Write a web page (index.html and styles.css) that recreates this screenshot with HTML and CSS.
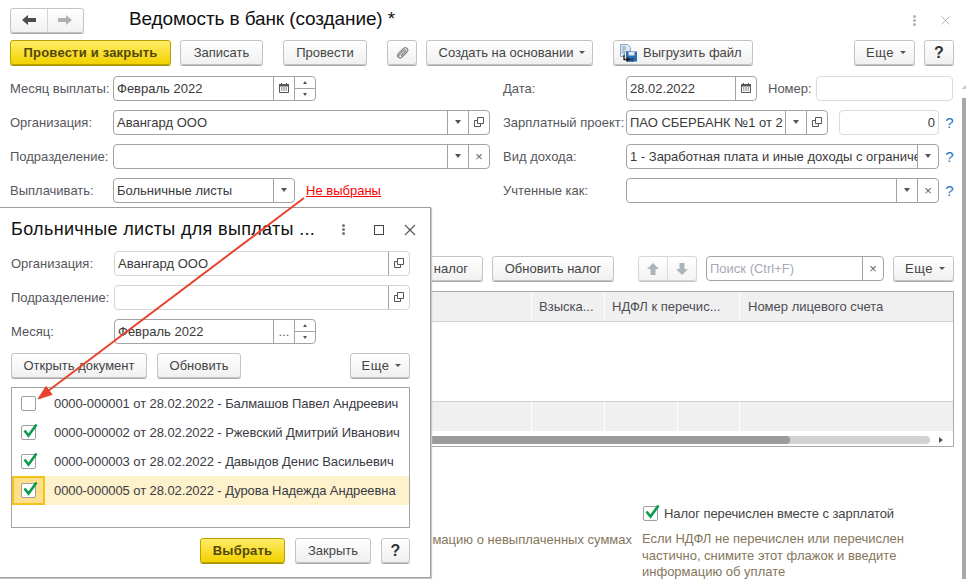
FILE: index.html
```html
<!DOCTYPE html>
<html lang="ru">
<head>
<meta charset="utf-8">
<title>Ведомость в банк</title>
<link rel="stylesheet" href="styles.css">
</head>
<body>
<svg class="defs" width="0" height="0">
  <symbol id="cal" viewBox="0 0 12 12"><path d="M1.5 2.5h9v8h-9z" fill="#fff" stroke="#555"/><path d="M1.5 2h9v2.5h-9z" fill="#555"/><path d="M3.5 1v2M8.500 1v2" stroke="#555"/><path d="M3 6h1.500M5.300 6h1.500M7.600 6h1.400M3 8h1.500M5.300 8h1.500M7.600 8h1.400" stroke="#555"/></symbol>
  <symbol id="open" viewBox="0 0 12 12"><path d="M4.500 1.500h6v6h-6z" fill="none" stroke="#555"/><path d="M1.500 4.500h3v3h3v3h-6z" fill="#fff" stroke="#555"/></symbol>
  <symbol id="check" viewBox="0 0 18 18"><path d="M3.500 8.500l4 5 8-11" fill="none" stroke="#0a9b4f" stroke-width="2.600"/></symbol>
</svg>

<div class="page">
  <header class="head">
    <div class="nav">
      <span class="nav-btn"><svg width="16" height="12" viewBox="0 0 16 12"><path d="M1 6l6-5v3h8v4H7v3z" fill="#4d4d4d"/></svg></span>
      <span class="nav-btn"><svg width="16" height="12" viewBox="0 0 16 12"><path d="M15 6L9 1v3H1v4h8v3z" fill="#b0b0b0"/></svg></span>
    </div>
    <h1 class="title">Ведомость в банк (создание) *</h1>
    <span class="dots"><i></i><i></i><i></i></span>
    <svg class="close" width="9" height="9" viewBox="0 0 9 9"><path d="M.5.500l8 8M8.500.500l-8 8" stroke="#b5b5b5"/></svg>
  </header>

  <div class="toolbar">
    <button class="btn primary w-161">Провести и закрыть</button>
    <button class="btn w-83 ml-9">Записать</button>
    <button class="btn w-84 ml-20">Провести</button>
    <button class="btn w-30 ml-20"><svg width="16" height="16" viewBox="0 0 16 16"><path d="M4.500 12.500c-1.500-1.500-1-3 0-4l5-5c1-1 2.500-1 3.500 0s1 2.500 0 3.500L7.500 12.500c-.7.700-1.700.700-2.400 0s-.7-1.700 0-2.400l5-5c.4-.4 1-.4 1.300 0s.4.900 0 1.300L7 11" fill="none" stroke="#8a8a8a" stroke-width="1.200"/></svg></button>
    <button class="btn w-167 ml-9 pad-l">Создать на основании<span class="caret"></span></button>
    <button class="btn w-140 ml-20 icon-btn"><svg width="20" height="20" viewBox="0 0 20 20"><path d="M1.500 1.500h7l3 3v4h-6v5h-4z" fill="#dfe8f3" stroke="#8ba3c2"/><path d="M3 4h4M3 6h4M3 8h2M3 10h2" stroke="#7f99bb"/><path d="M7 8.500h11v10H7z" fill="#2a6fb0"/><path d="M9.500 9h6v3.500h-6z" fill="#dfe8f3"/><path d="M10 15h5v3.500h-5z" fill="#1d4f80"/><path d="M5 12v4.500h5M8 14.500l2.300 2-2.300 2" fill="none" stroke="#222" stroke-width="1.300"/></svg>Выгрузить файл</button>
    <button class="btn w-61 ml-auto more">Еще<span class="caret"></span></button>
    <button class="btn w-30 ml-9 help">?</button>
  </div>

  <section class="fields">
    <div class="col col-left">
      <div class="row">
        <label class="lbl">Месяц выплаты:</label>
        <div class="input w-203"><span class="val">Февраль 2022</span><span class="seg"><svg width="12" height="12"><use href="#cal"/></svg></span><span class="spin"><span class="tri-up"></span><span class="tri-down"></span></span></div>
      </div>
      <div class="row">
        <label class="lbl">Организация:</label>
        <div class="input w-377"><span class="val">Авангард ООО</span><span class="seg"><span class="tri"></span></span><span class="seg"><svg width="12" height="12"><use href="#open"/></svg></span></div>
      </div>
      <div class="row">
        <label class="lbl">Подразделение:</label>
        <div class="input w-377"><span class="val"></span><span class="seg"><span class="tri"></span></span><span class="seg x">×</span></div>
      </div>
      <div class="row">
        <label class="lbl">Выплачивать:</label>
        <div class="input w-182"><span class="val">Больничные листы</span><span class="seg"><span class="tri"></span></span></div>
        <a class="red-link">Не выбраны</a>
      </div>
    </div>
    <div class="col col-right">
      <div class="row">
        <label class="lbl lbl-r">Дата:</label>
        <div class="input w-131"><span class="val">28.02.2022</span><span class="seg"><svg width="12" height="12"><use href="#cal"/></svg></span></div>
        <label class="lbl lbl-n">Номер:</label>
        <div class="input w-137 light"></div>
      </div>
      <div class="row">
        <label class="lbl lbl-r">Зарплатный проект:</label>
        <div class="input w-202"><span class="val">ПАО СБЕРБАНК №1 от 2</span><span class="seg"><span class="tri"></span></span><span class="seg"><svg width="12" height="12"><use href="#open"/></svg></span></div>
        <div class="input w-100 light ml-11"><span class="val right">0</span></div>
        <span class="q">?</span>
      </div>
      <div class="row">
        <label class="lbl lbl-r">Вид дохода:</label>
        <div class="input w-313"><span class="val">1 - Заработная плата и иные доходы с ограниче</span><span class="seg"><span class="tri"></span></span></div>
        <span class="q">?</span>
      </div>
      <div class="row">
        <label class="lbl lbl-r">Учтенные как:</label>
        <div class="input w-313"><span class="val"></span><span class="seg"><span class="tri"></span></span><span class="seg x">×</span></div>
        <span class="q">?</span>
      </div>
    </div>
  </section>

  <div class="toolbar2">
    <button class="btn w-121 tax">Пересчитать налог</button>
    <button class="btn w-122 ml-9">Обновить налог</button>
    <div class="updown ml-24">
      <span><svg width="14" height="12" viewBox="0 0 14 12"><path d="M7 0l6 6H9.500v6h-5V6H1z" fill="#a9b4bb"/></svg></span>
      <span><svg width="14" height="12" viewBox="0 0 14 12"><path d="M7 12l6-6H9.500V0h-5v6H1z" fill="#a9b4bb"/></svg></span>
    </div>
    <div class="input w-178 ml-9 search"><span class="val ph">Поиск (Ctrl+F)</span><span class="seg x">×</span></div>
    <button class="btn w-61 ml-9 more">Еще<span class="caret"></span></button>
  </div>

  <div class="table">
    <div class="t-head">
      <span class="c c1"></span><span class="c c2">Взыска...</span><span class="c c3">НДФЛ к перечис...</span><span class="c c4">Номер лицевого счета</span>
    </div>
    <div class="t-body"></div>
    <div class="t-foot">
      <span class="c c1"></span><span class="c c2"></span><span class="c c3a"></span><span class="c c3b"></span><span class="c c4"></span>
    </div>
    <div class="t-scroll"><div class="track"><div class="thumb"></div></div><span class="tri-right"></span></div>
  </div>

  <section class="bottom">
    <p class="note-left">Информацию о невыплаченных суммах</p>
    <div class="note-right">
      <div class="tick-line"><span class="box"><svg class="mark" width="18" height="18"><use href="#check"/></svg></span><span class="tick-text">Налог перечислен вместе с зарплатой</span></div>
      <p class="note">Если НДФЛ не перечислен или перечислен<br>частично, снимите этот флажок и введите<br>информацию об уплате</p>
    </div>
  </section>

  <div class="v-scroll"></div>

  <div class="under"><span class="under-a">Ш</span><span class="under-b">Т</span></div>

  <aside class="modal">
    <div class="m-head">
      <h2 class="m-title">Больничные листы для выплаты ...</h2>
      <span class="dots dark"><i></i><i></i><i></i></span>
      <span class="square"></span>
      <svg class="m-close" width="12" height="12" viewBox="0 0 12 12"><path d="M1 1l10 10M11 1L1 11" stroke="#555" stroke-width="1.100"/></svg>
    </div>
    <div class="m-row">
      <label class="lbl m-lbl">Организация:</label>
      <div class="input w-296 light-b"><span class="val">Авангард ООО</span><span class="seg"><svg width="12" height="12"><use href="#open"/></svg></span></div>
    </div>
    <div class="m-row">
      <label class="lbl m-lbl">Подразделение:</label>
      <div class="input w-296 light-b"><span class="val"></span><span class="seg"><svg width="12" height="12"><use href="#open"/></svg></span></div>
    </div>
    <div class="m-row">
      <label class="lbl m-lbl">Месяц:</label>
      <div class="input w-202"><span class="val">Февраль 2022</span><span class="seg dots-seg">...</span><span class="spin"><span class="tri-up"></span><span class="tri-down"></span></span></div>
    </div>
    <div class="m-tools">
      <button class="btn w-136">Открыть документ</button>
      <button class="btn w-84 ml-10">Обновить</button>
      <button class="btn w-60 ml-auto more">Еще<span class="caret"></span></button>
    </div>
    <ul class="m-list">
      <li class="m-item"><span class="cell"><span class="box"></span></span><span class="doc">0000-000001 от 28.02.2022 - Балмашов Павел Андреевич</span></li>
      <li class="m-item"><span class="cell"><span class="box"><svg class="mark" width="18" height="18"><use href="#check"/></svg></span></span><span class="doc">0000-000002 от 28.02.2022 - Ржевский Дмитрий Иванович</span></li>
      <li class="m-item"><span class="cell"><span class="box"><svg class="mark" width="18" height="18"><use href="#check"/></svg></span></span><span class="doc">0000-000003 от 28.02.2022 - Давыдов Денис Васильевич</span></li>
      <li class="m-item current"><span class="cell"><span class="box"><svg class="mark" width="18" height="18"><use href="#check"/></svg></span></span><span class="doc">0000-000005 от 28.02.2022 - Дурова Надежда Андреевна</span></li>
    </ul>
    <div class="m-foot">
      <button class="btn primary w-85">Выбрать</button>
      <button class="btn w-76 ml-10">Закрыть</button>
      <button class="btn w-29 ml-10 help">?</button>
    </div>
  </aside>

  <svg class="arrow" width="966" height="579" viewBox="0 0 966 579">
    <path d="M304 198L48 391" fill="none" stroke="#e8432f" stroke-width="2"/>
    <path d="M38 399l8-12.500 6 8z" fill="#e8432f" stroke="#e8432f"/>
  </svg>
</div>
</body>
</html>
```

FILE: styles.css
```css
* { box-sizing: border-box; }
html, body { margin: 0; padding: 0; background: #fff; }
body { font-family: "Liberation Sans", Arial, sans-serif; font-size: 13px; color: #3a3a3a; }
.defs { position: absolute; }
.page { position: relative; width: 966px; height: 579px; overflow: hidden; background: #fff; }

.head { display: flex; align-items: center; height: 34px; padding: 6px 0 0 10px; }
.nav { display: flex; width: 74px; height: 25px; border: 1px solid #c4c4c4; border-radius: 3px; background: linear-gradient(#fff, #f1f1f1); box-shadow: 0 1px 0 #a9a9a9; }
.nav-btn { flex: 1; display: flex; align-items: center; justify-content: center; }
.nav-btn + .nav-btn { border-left: 1px solid #d5d5d5; }
.title { margin: 0 0 2px 45px; font-size: 19px; font-weight: 400; color: #111; letter-spacing: -.1px; }
.dots { display: flex; flex-direction: column; gap: 1px; }
.dots i { display: block; width: 3px; height: 3px; border-radius: 50%; background: #b3b3b3; }
.head .dots { margin-left: auto; margin-right: 25px; }
.close { margin-right: 16px; }

.toolbar { display: flex; align-items: flex-start; height: 26px; margin-top: 6px; padding: 0 12px 0 10px; }
.btn { display: inline-flex; align-items: center; justify-content: center; height: 25px; padding: 0; border: 1px solid #c4c4c4; border-radius: 3px; background: linear-gradient(#fff, #f0f0f0); box-shadow: 0 1px 0 #a9a9a9; font: inherit; color: #444; }
.btn.primary { background: linear-gradient(#ffec68, #f2d200); border-color: #b9a200; box-shadow: 0 1px 0 #a49000; font-weight: 700; color: #52470c; letter-spacing: .2px; }
.btn.help { font-size: 16px; font-weight: 700; color: #333; }
.btn.icon-btn { justify-content: flex-start; padding-left: 5px; }
.btn.pad-l { padding-left: 5px; }
.btn.more { padding-left: 3px; letter-spacing: .5px; }
.icon-btn svg { margin-right: 4px; }
.caret { width: 0; height: 0; margin-left: 6px; border: 3px solid transparent; border-top: 3px solid #555; border-bottom: 0; }

.w-29 { width: 29px; } .w-30 { width: 30px; } .w-60 { width: 60px; } .w-61 { width: 61px; }
.w-76 { width: 76px; } .w-83 { width: 83px; } .w-84 { width: 84px; } .w-85 { width: 85px; } .w-100 { width: 100px; }
.w-121 { width: 121px; } .w-122 { width: 122px; } .w-131 { width: 131px; } .w-136 { width: 136px; } .w-137 { width: 137px; }
.w-140 { width: 140px; } .w-161 { width: 161px; } .w-167 { width: 167px; } .w-178 { width: 178px; } .w-182 { width: 182px; }
.w-202 { width: 202px; } .w-203 { width: 203px; } .w-296 { width: 296px; } .w-313 { width: 313px; } .w-377 { width: 377px; }
.ml-9 { margin-left: 9px; } .ml-10 { margin-left: 10px; } .ml-11 { margin-left: 11px; } .ml-20 { margin-left: 20px; } .ml-24 { margin-left: 24px; } .ml-auto { margin-left: auto; }

.fields { display: flex; margin-top: 10px; padding-left: 10px; }
.col { display: flex; flex-direction: column; gap: 10px; }
.col-left { width: 493px; }
.row { display: flex; align-items: center; height: 24px; }
.lbl { flex: none; width: 103px; color: #56565c; white-space: nowrap; }
.lbl-r { width: 123px; }
.lbl-n { width: 48px; margin-left: 11px; }
.input { flex: none; display: flex; height: 25px; border: 1px solid #a3a3a3; border-radius: 4px; background: #fff; overflow: hidden; color: #3a3a3a; }
.input.light { border-color: #dcdcdc; }
.input.light-b { border-color: #d4d4d4; }
.val { flex: 1; min-width: 0; padding: 0 2px 0 3px; line-height: 23px; white-space: nowrap; overflow: hidden; }
.val.right { text-align: right; padding-right: 3px; }
.val.ph { color: #a8a8b8; }
.seg { flex: none; width: 21px; display: flex; align-items: center; justify-content: center; border-left: 1px solid #a3a3a3; color: #666; }
.seg.x { font-size: 13px; }
.dots-seg { color: #666; }
.spin { flex: none; width: 21px; display: flex; flex-direction: column; border-left: 1px solid #a3a3a3; }
.tri-up, .tri-down { flex: 1; display: flex; align-items: center; justify-content: center; }
.tri-up { border-bottom: 1px solid #a3a3a3; }
.tri-up::before { content: ""; border: 2.500px solid transparent; border-bottom: 3px solid #555; border-top: 0; }
.tri-down::before { content: ""; border: 2.500px solid transparent; border-top: 3px solid #555; border-bottom: 0; }
.tri { border: 3px solid transparent; border-top: 4px solid #555; border-bottom: 0; }
.red-link { margin-left: 11px; color: #f00; text-decoration: underline; }
.q { margin-left: 5px; width: 11px; text-align: center; font-size: 15px; color: #1b78c4; }

.toolbar2 { display: flex; align-items: flex-start; height: 26px; margin-top: 54px; padding-left: 362px; }
.tax { justify-content: flex-end; padding-right: 14px; overflow: hidden; white-space: nowrap; }
.updown { display: flex; width: 59px; height: 25px; border: 1px solid #d5d5d5; border-radius: 3px; background: linear-gradient(#fff, #f3f3f3); box-shadow: 0 1px 0 #c0c0c0; }
.updown span { flex: 1; display: flex; align-items: center; justify-content: center; }
.updown span + span { border-left: 1px solid #dcdcdc; }

.table { display: flex; flex-direction: column; width: 944px; height: 156px; margin: 9px 0 0 10px; border: 1px solid #a9a9a9; }
.t-head, .t-foot { display: flex; background: #f0f0f0; }
.t-head { height: 30px; border-bottom: 1px solid #d0d0d0; }
.t-body { height: 79px; }
.t-foot { height: 30px; border-top: 1px solid #d0d0d0; }
.c { display: block; border-right: 1px solid #fff; line-height: 29px; white-space: nowrap; color: #4d4d55; }
.c1 { width: 521px; }
.c2 { width: 73px; padding-left: 7px; }
.c3 { width: 135px; padding-left: 7px; }
.c3a { width: 73px; }
.c3b { width: 62px; }
.c4 { flex: 1; border-right: 0; padding-left: 8px; }
.t-scroll { flex: 1; display: flex; align-items: center; padding-top: 2px; }
.track { width: 919px; height: 8px; border-radius: 4px; background: #d2d2d2; }
.thumb { width: 779px; height: 8px; border-radius: 4px; background: #9b9b9b; }
.tri-right { margin-left: 9px; border: 3px solid transparent; border-left: 4px solid #555; border-right: 0; }

.bottom { display: flex; margin-top: 58px; }
.note-left { width: 632px; margin: 27px 0 0; text-align: right; color: #85765c; white-space: nowrap; }
.note-right { margin-left: 10px; }
.tick-line { display: flex; align-items: center; height: 16px; padding-left: 1px; }
.tick-text { margin-left: 6px; color: #444; letter-spacing: -.08px; }
.note { margin: 10px 0 0; color: #85765c; line-height: 16.500px; white-space: nowrap; }
.box { position: relative; display: block; flex: none; width: 15px; height: 15px; border: 1px solid #9f9f9f; border-radius: 2px; background: #fff; }
.mark { position: absolute; left: -1px; top: -4px; }

.v-scroll { position: absolute; right: 0; top: 98px; width: 4px; height: 481px; background: #a8a8a8; }
.v-scroll::before { content: ""; position: absolute; top: -13px; left: 0; border: 3px solid transparent; border-bottom: 4px solid #c8c8c8; border-top: 0; }
.under { position: absolute; left: 11px; top: 574px; color: #1b5fb0; }
.under-a { display: inline-block; width: 204px; }

.modal { position: absolute; left: -1px; top: 207px; width: 432px; height: 371px; padding: 0 20px 0 11px; border: 1px solid #9e9e9e; background: #fff; box-shadow: 1px 1px 1px #c8c8c8; }
.m-head { display: flex; align-items: center; height: 43px; }
.m-title { margin: 0; font-size: 18px; font-weight: 400; color: #111; letter-spacing: .33px; white-space: nowrap; }
.m-head .dots { margin-left: 27px; }
.dots.dark i { background: #777; }
.square { width: 10px; height: 10px; margin-left: 29px; border: 1.500px solid #444; }
.m-close { margin-left: 20px; margin-right: -14px; }
.m-row { display: flex; align-items: center; height: 24px; margin-bottom: 10px; }
.m-lbl { width: 103px; }
.m-tools { display: flex; height: 26px; margin-top: 1px; }
.m-list { width: 399px; height: 141px; margin: 8px 0 0; padding: 1px 0 0; list-style: none; border: 1px solid #a3a3a3; }
.m-item { display: flex; align-items: center; height: 29px; }
.cell { display: flex; align-items: center; justify-content: center; flex: none; width: 33px; height: 29px; padding-right: 1px; margin-right: 9px; }
.doc { white-space: nowrap; color: #3b3b45; letter-spacing: -.08px; }
.current { background: #fdf2cc; }
.current .cell { background: #fee08b; border: 2px solid #f5c21b; }
.m-foot { display: flex; justify-content: flex-end; margin-top: 10px; }
.arrow { position: absolute; left: 0; top: 0; pointer-events: none; }
```
